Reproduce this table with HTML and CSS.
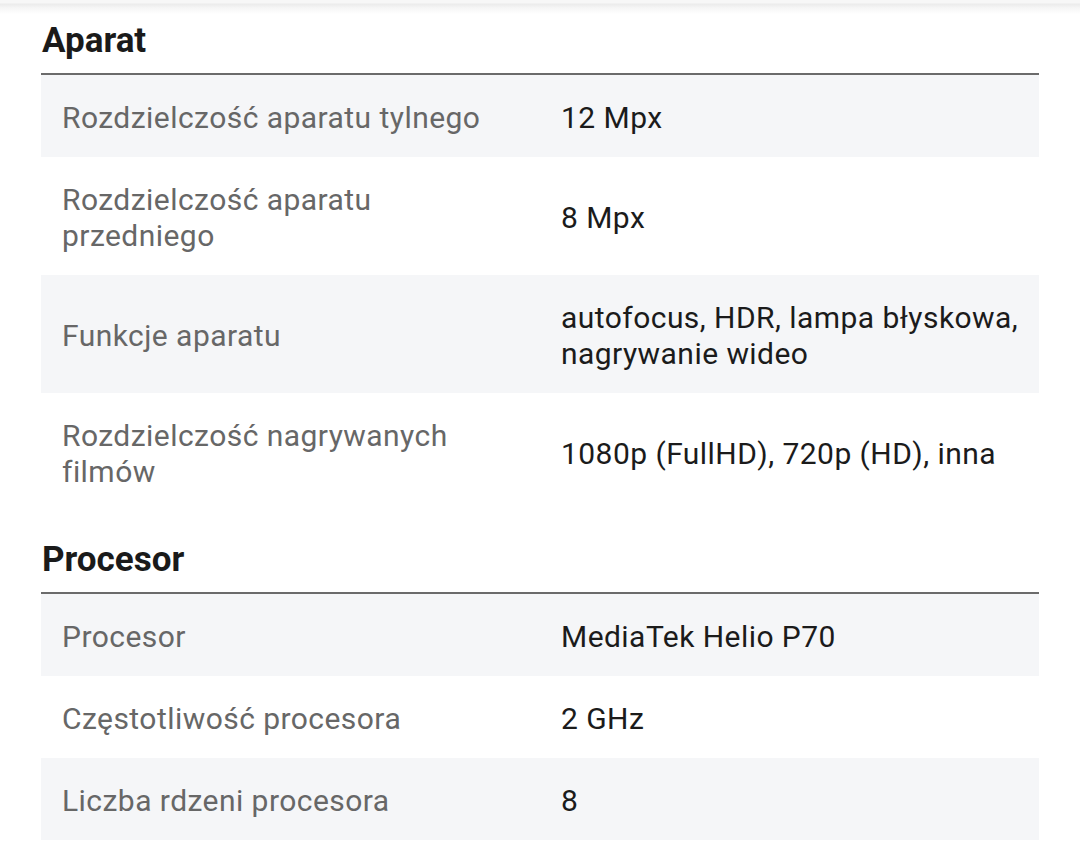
FILE: index.html
```html
<!DOCTYPE html>
<html lang="pl">
<head>
<meta charset="utf-8">
<link rel="stylesheet" href="styles.css">
</head>
<body>
<div class="topshade"></div>
<main class="page">
  <section class="section">
    <h2 class="section-title">Aparat</h2>
    <div class="row">
      <div class="label">Rozdzielczość aparatu tylnego</div>
      <div class="value">12 Mpx</div>
    </div>
    <div class="row">
      <div class="label">Rozdzielczość aparatu przedniego</div>
      <div class="value">8 Mpx</div>
    </div>
    <div class="row">
      <div class="label">Funkcje aparatu</div>
      <div class="value">autofocus, HDR, lampa błyskowa, nagrywanie wideo</div>
    </div>
    <div class="row">
      <div class="label">Rozdzielczość nagrywanych filmów</div>
      <div class="value">1080p (FullHD), 720p (HD), inna</div>
    </div>
  </section>
  <section class="section">
    <h2 class="section-title">Procesor</h2>
    <div class="row">
      <div class="label">Procesor</div>
      <div class="value">MediaTek Helio P70</div>
    </div>
    <div class="row">
      <div class="label">Częstotliwość procesora</div>
      <div class="value">2 GHz</div>
    </div>
    <div class="row">
      <div class="label">Liczba rdzeni procesora</div>
      <div class="value">8</div>
    </div>
  </section>
</main>
</body>
</html>
```
FILE: styles.css
```css
* { box-sizing: border-box; }
html, body { margin: 0; padding: 0; background: #fff; }
body {
  font-family: Roboto, "Noto Sans", "Liberation Sans", sans-serif;
  width: 1080px;
  height: 850px;
  overflow: hidden;
}
.topshade {
  height: 14px;
  background: linear-gradient(to bottom, #f7f7f7 0px, #f7f7f7 3px, #ebebeb 4px, #f6f6f6 8px, #ffffff 14px);
}
.page {
  padding: 7px 41px 0 41px;
}
.section + .section {
  margin-top: 29px;
}
.section-title {
  margin: 0;
  font-size: 35px;
  line-height: 40px;
  font-weight: 700;
  color: #1a1a1a;
  padding: 0 0 12px 1px;
  border-bottom: 2px solid #6b6b6b;
}
.row {
  display: flex;
  align-items: center;
}
.row:nth-of-type(odd) {
  background: #f5f6f8;
}
.label, .value {
  flex: 1 1 50%;
  font-size: 30px;
  line-height: 36px;
  letter-spacing: 0.45px;
  padding: 25px 21px 21px 21px;
}
.label {
  color: #676767;
}
.value {
  color: #1b1b1b;
  padding-right: 8px;
}
```
